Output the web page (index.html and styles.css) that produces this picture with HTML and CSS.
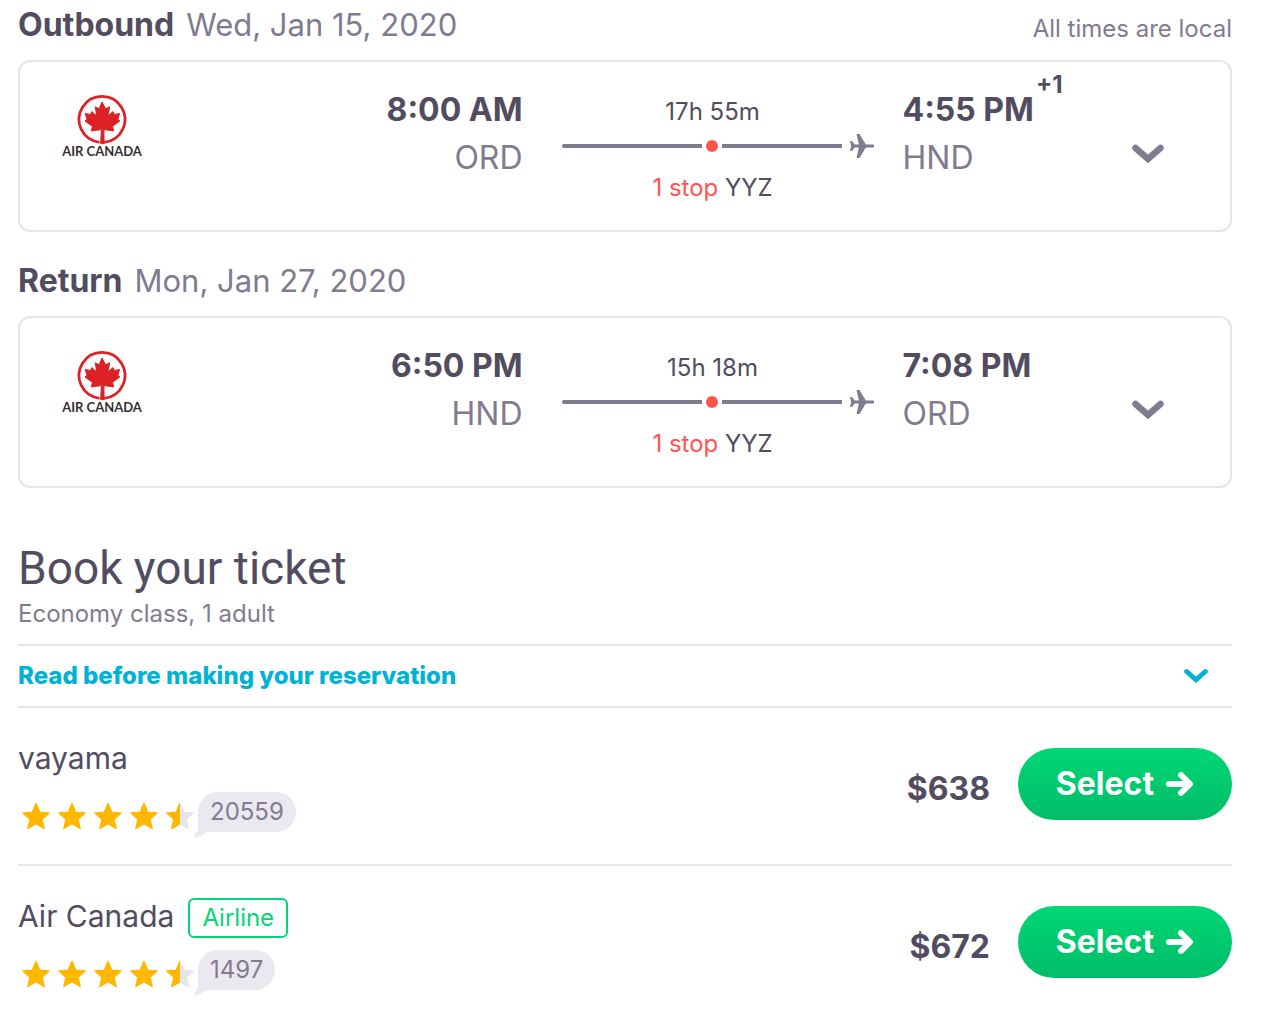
FILE: index.html
```html
<!DOCTYPE html>
<html lang="en">

<head>
  <meta charset="UTF-8">
  <meta name="viewport" content="width=device-width, initial-scale=1.0">
  <title>Book your ticket</title>
  <link rel="stylesheet" href="styles.css">
</head>

<body>
  <!-- shared icons -->
  <svg class="sprite" aria-hidden="true">
    <symbol id="air-canada" viewBox="0 0 80 60">
      <path d="M37.500 46.300A23 23 0 1 1 42.500 46.300" fill="none" stroke="#dc2226" stroke-width="2.800" />
      <path d="M40 6l3.600 6.800 4-2-1.600 9.200 5-4.400 1.200 2.800 5.400-.8-1.800 5.600 2 1.800-7.200 5.400 1 4.600-9.800-1.400.4 14h-3.600l.8-14-10 1.400 1-4.600-7.400-5.400 2-1.800-1.800-5.600 5.400.8 1.200-2.800 5 4.400-1.600-9.200 4 2z" fill="#dc2226" stroke="#dc2226" stroke-width="1" stroke-linejoin="round" />
      <text x="40" y="60" text-anchor="middle" class="logo-text">AIR CANADA</text>
    </symbol>
    <symbol id="plane" viewBox="0 0 24 24">
      <path d="M6.500 0h3l6.300 10.400H23a1.600 1.600 0 0 1 0 3.200h-7.200L9.500 24h-3l2.400-10.400H4.600L2 17H0l1.200-5L0 7h2l2.600 3.400h4.300z" fill="currentColor" />
    </symbol>
    <symbol id="chevron" viewBox="0 0 32 20">
      <path d="M3.500 4L16 15 28.500 4" fill="none" stroke="currentColor" stroke-width="6.500" stroke-linecap="round" />
    </symbol>
    <symbol id="star" viewBox="0 0 36 36">
      <path d="M18 5.500l3.700 8.700 9.300.8-7 6.200 2.100 9.200L18 25.600l-8.100 4.800L12 21.200 5 15l9.300-.8z" fill="currentColor" stroke="currentColor" stroke-width="1.500" stroke-linejoin="round" />
    </symbol>
    <symbol id="half-star" viewBox="0 0 36 36">
      <use href="#star" class="star-off" />
      <svg width="18" height="36"><use href="#star" width="36" height="36" /></svg>
    </symbol>
    <symbol id="arrow" viewBox="0 0 28 26">
      <path d="M3 13h20M15 4l9 9-9 9" fill="none" stroke="currentColor" stroke-width="6" stroke-linecap="round" stroke-linejoin="round" />
    </symbol>
    <symbol id="tail" viewBox="0 0 20 26">
      <path d="M4 0v18L.4 23.200Q-.5 26 3 25.600L13 20h7V0z" fill="currentColor" />
    </symbol>
  </svg>

  <main class="page">
    <section class="leg">
      <header class="leg-header">
        <h2>Outbound</h2>
        <span class="date">Wed, Jan 15, 2020</span>
        <span class="note">All times are local</span>
      </header>
      <div class="leg-card">
        <svg class="logo" role="img" aria-label="Air Canada"><use href="#air-canada" /></svg>
        <div class="depart">
          <div class="time">8:00 AM</div>
          <div class="code">ORD</div>
        </div>
        <div class="route">
          <div>17h 55m</div>
          <div class="track">
            <span class="line"></span><span class="dot"></span><span class="line"></span>
            <svg class="plane"><use href="#plane" /></svg>
          </div>
          <div><span class="stop">1 stop</span> YYZ</div>
        </div>
        <div class="arrive">
          <div class="time">4:55 PM<span class="plus">+1</span></div>
          <div class="code">HND</div>
        </div>
        <button class="toggle" type="button" aria-label="Show outbound details">
          <svg class="chevron"><use href="#chevron" /></svg>
        </button>
      </div>
    </section>

    <section class="leg">
      <header class="leg-header">
        <h2>Return</h2>
        <span class="date">Mon, Jan 27, 2020</span>
      </header>
      <div class="leg-card">
        <svg class="logo" role="img" aria-label="Air Canada"><use href="#air-canada" /></svg>
        <div class="depart">
          <div class="time">6:50 PM</div>
          <div class="code">HND</div>
        </div>
        <div class="route">
          <div>15h 18m</div>
          <div class="track">
            <span class="line"></span><span class="dot"></span><span class="line"></span>
            <svg class="plane"><use href="#plane" /></svg>
          </div>
          <div><span class="stop">1 stop</span> YYZ</div>
        </div>
        <div class="arrive">
          <div class="time">7:08 PM</div>
          <div class="code">ORD</div>
        </div>
        <button class="toggle" type="button" aria-label="Show return details">
          <svg class="chevron"><use href="#chevron" /></svg>
        </button>
      </div>
    </section>

    <section class="booking">
      <h1>Book your ticket</h1>
      <p class="summary">Economy class, 1 adult</p>
      <button class="read-before" type="button">
        Read before making your reservation
        <svg class="chevron-small"><use href="#chevron" /></svg>
      </button>

      <div class="provider">
        <div class="provider-info">
          <div class="provider-name">vayama</div>
          <div class="rating">
            <svg class="star"><use href="#star" /></svg>
            <svg class="star"><use href="#star" /></svg>
            <svg class="star"><use href="#star" /></svg>
            <svg class="star"><use href="#star" /></svg>
            <svg class="star"><use href="#half-star" /></svg>
            <span class="reviews"><svg class="tail"><use href="#tail" /></svg><span>20559</span></span>
          </div>
        </div>
        <div class="price">$638</div>
        <button class="select" type="button">Select <svg class="arrow"><use href="#arrow" /></svg></button>
      </div>

      <div class="provider">
        <div class="provider-info">
          <div class="provider-name">Air Canada <span class="tag">Airline</span></div>
          <div class="rating">
            <svg class="star"><use href="#star" /></svg>
            <svg class="star"><use href="#star" /></svg>
            <svg class="star"><use href="#star" /></svg>
            <svg class="star"><use href="#star" /></svg>
            <svg class="star"><use href="#half-star" /></svg>
            <span class="reviews"><svg class="tail"><use href="#tail" /></svg><span>1497</span></span>
          </div>
        </div>
        <div class="price">$672</div>
        <button class="select" type="button">Select <svg class="arrow"><use href="#arrow" /></svg></button>
      </div>
    </section>
  </main>
</body>

</html>
```
FILE: styles.css
```css
* {
  box-sizing: border-box;
}

body {
  margin: 0;
  font-family: Inter, "Liberation Sans", sans-serif;
  font-size: 24px;
  line-height: 32px;
  color: #524c61;
  background-color: white;
}

h1,
h2,
p {
  margin: 0;
}

button {
  font: inherit;
  border: none;
  background: none;
  padding: 0;
  cursor: pointer;
}

svg {
  display: block;
  flex-shrink: 0;
}

.sprite {
  position: absolute;
  width: 0;
  height: 0;
}

.page {
  padding: 0 46px 0 18px;
}

/* flight legs */
.leg {
  margin-bottom: 24px;
}

.leg-header {
  display: flex;
  align-items: flex-end;
  gap: 12px;
  padding: 5px 0 15px;
}

.leg-header h2 {
  font-size: 32px;
  font-weight: 700;
  line-height: 40px;
}

.date {
  font-size: 31px;
  line-height: 40px;
  color: #817b8f;
}

.note {
  margin-left: auto;
  color: #817b8f;
}

.leg-card {
  display: grid;
  grid-template-columns: 80px 7fr 324px 4fr 32px;
  column-gap: 28px;
  padding: 24px 66px 26px 42px;
  border: 2px solid #e6e4eb;
  border-radius: 12px;
}

.logo {
  width: 80px;
  height: 60px;
  margin-top: 10px;
  overflow: visible;
}

.logo-text {
  font-family: Lato, sans-serif;
  font-size: 13px;
  font-weight: 700;
  fill: #33312f;
}

#air-canada {
  overflow: visible;
}

.depart {
  text-align: right;
}

.time,
.code {
  font-size: 32px;
  line-height: 48px;
  white-space: nowrap;
}

.time {
  position: relative;
  font-weight: 700;
}

.code {
  color: #817b8f;
}

.plus {
  position: absolute;
  top: -25px;
  margin-left: 2px;
  font-size: 24px;
}

.route {
  padding: 10px 1px 0 11px;
}

.route > div {
  padding-right: 10px;
  text-align: center;
}

.route .track {
  display: flex;
  align-items: center;
  padding: 0;
  margin: 6px 0 14px;
}

.line {
  flex: 1;
  height: 4px;
  background-color: #817b8f;
}

.line:first-child {
  flex: 0 0 140px;
  border-radius: 2px 0 0 2px;
}

.dot {
  width: 12px;
  height: 12px;
  margin: 0 4px;
  border-radius: 50%;
  background-color: #ff5452;
}

.plane {
  width: 24px;
  height: 24px;
  margin-left: 8px;
  color: #817b8f;
}

.stop {
  color: #ff5452;
}

.toggle {
  align-self: start;
  margin-top: 58px;
  color: #817b8f;
}

.chevron {
  width: 32px;
  height: 20px;
}

/* ticket offers */
.booking {
  padding-top: 26px;
}

h1 {
  font-family: Roboto, "Liberation Sans", sans-serif;
  font-size: 46px;
  font-weight: 400;
  line-height: 60px;
}

.summary {
  padding-bottom: 14px;
  color: #817b8f;
}

.read-before {
  display: flex;
  align-items: center;
  justify-content: space-between;
  width: 100%;
  padding: 14px 24px 14px 0;
  border: solid #e6e4eb;
  border-width: 2px 0;
  font-weight: 800;
  color: #00b2d6;
}

.chevron-small {
  width: 24px;
  height: 16px;
}

.provider {
  display: flex;
  align-items: flex-start;
  padding-bottom: 30px;
}

.provider + .provider {
  border-top: 2px solid #e6e4eb;
}

.provider:last-child {
  padding-bottom: 16px;
}

.provider-info {
  flex: 1;
  padding-top: 28px;
}

.provider-name {
  display: flex;
  gap: 14px;
  height: 44px;
  font-size: 30px;
  line-height: 44px;
}

.tag {
  height: 40px;
  margin-top: 4px;
  padding: 0 12px;
  border: 2px solid #00d775;
  border-radius: 6px;
  font-size: 24px;
  line-height: 36px;
  color: #00d775;
}

.rating {
  display: flex;
  margin-top: 12px;
  color: #ffb700;
}

.star {
  width: 36px;
  height: 36px;
  margin-top: 6px;
}

.star-off {
  color: #e6e4eb;
}

.reviews {
  position: relative;
  height: 40px;
  padding: 0 12px;
  border-radius: 20px;
  line-height: 40px;
  color: #817b8f;
  background-color: #ebe9ef;
}

.reviews span {
  position: relative;
}

/* speech bubble tail under the count */
.tail {
  position: absolute;
  left: -4px;
  top: 20px;
  width: 20px;
  height: 26px;
  color: #ebe9ef;
}

.price {
  margin: 61px 28px 0 0;
  font-size: 32px;
  font-weight: 700;
  line-height: 40px;
}

.select {
  display: flex;
  align-items: center;
  justify-content: center;
  gap: 12px;
  width: 214px;
  height: 72px;
  margin-top: 40px;
  border-radius: 36px;
  font-size: 32px;
  font-weight: 700;
  color: white;
  background: linear-gradient(#00d775, #00bd68);
}

.arrow {
  width: 28px;
  height: 26px;
}
```
